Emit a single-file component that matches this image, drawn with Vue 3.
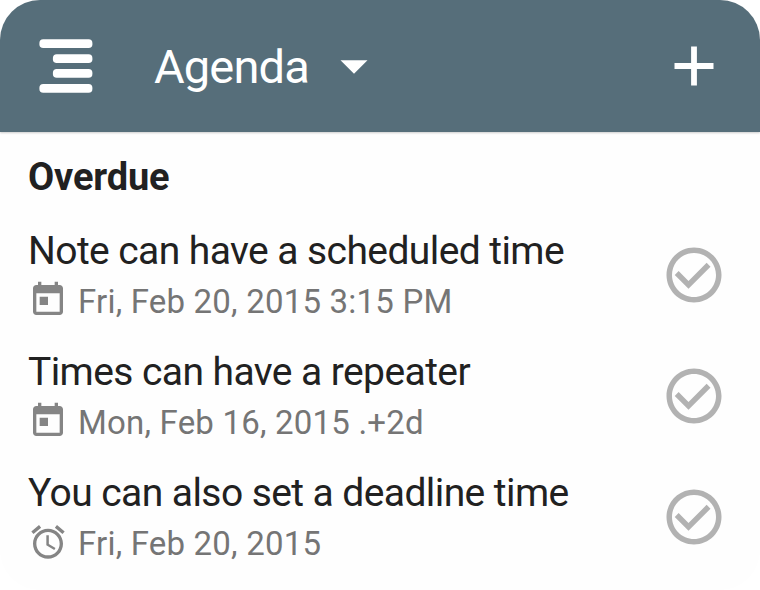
<script setup>
const notes = [
  { title: 'Note can have a scheduled time', when: 'Fri, Feb 20, 2015 3:15 PM', icon: 'today' },
  { title: 'Times can have a repeater', when: 'Mon, Feb 16, 2015 .+2d', icon: 'today' },
  { title: 'You can also set a deadline time', when: 'Fri, Feb 20, 2015', icon: 'alarm' },
]
const icons = {
  today: 'M19 3h-1V1h-2v2H8V1H6v2H5c-1.11 0-1.99.9-1.99 2L3 19c0 1.1.89 2 2 2h14c1.1 0 2-.9 2-2V5c0-1.1-.9-2-2-2zm0 16H5V8h14v11zM7 10h5v5H7z',
  alarm: 'M22 5.72l-4.6-3.86-1.29 1.53 4.6 3.86L22 5.72zM7.88 3.39L6.6 1.86 2 5.71l1.29 1.53 4.59-3.85zM12.5 8H11v6l4.75 2.85.75-1.23-4-2.37V8zM12 4c-4.97 0-9 4.03-9 9s4.02 9 9 9 9-4.03 9-9-4.03-9-9-9zm0 16c-3.87 0-7-3.13-7-7s3.13-7 7-7 7 3.13 7 7-3.13 7-7 7z',
}
</script>

<template>
  <main class="screen">
    <header class="bar">
      <svg class="menu" viewBox="0 0 54 54">
        <rect x="0.4" y="0.3" width="53" height="8.8" rx="3.8" />
        <rect x="13.9" y="15.2" width="39.5" height="8.8" rx="3.8" />
        <rect x="13.9" y="30" width="39.5" height="8.8" rx="3.8" />
        <rect x="0.4" y="44.9" width="53" height="8.8" rx="3.8" />
      </svg>
      <h1 class="heading">Agenda</h1>
      <svg class="caret" viewBox="0 0 28 14"><path d="M0.5 0.2h27L14 13.8z" /></svg>
      <svg class="plus" viewBox="0 0 40 40"><path d="M17.1 0.5h5.8V17.1h16.6v5.8H22.9v16.6h-5.8V22.9H0.5v-5.8h16.6z" /></svg>
    </header>
    <section class="list">
      <h2 class="group">Overdue</h2>
      <article v-for="n in notes" :key="n.title" class="note">
        <div class="body">
          <div class="title">{{ n.title }}</div>
          <div class="meta">
            <svg class="kind" viewBox="0 0 24 24"><path :d="icons[n.icon]" /></svg>
            <span>{{ n.when }}</span>
          </div>
        </div>
        <svg class="done" viewBox="0 0 24 24">
          <path d="M12 2C6.48 2 2 6.48 2 12s4.48 10 10 10 10-4.48 10-10S17.52 2 12 2zm0 18c-4.42 0-8-3.58-8-8s3.58-8 8-8 8 3.58 8 8-3.58 8-8 8zM16.59 7.58L10 14.17l-3.59-3.58L5 12l5 5 8-8z" />
        </svg>
      </article>
    </section>
  </main>
</template>

<style>
body { margin: 0; background: #fff; }
</style>

<style scoped>
.screen {
  width: 760px;
  height: 590px;
  overflow: hidden;
  border-radius: 40px;
  background: #fefefe;
  font-family: Roboto, sans-serif;
  color: #212121;
}
svg { display: block; flex: none; }
.bar {
  box-sizing: border-box;
  height: 132px;
  display: flex;
  align-items: center;
  padding: 0 46px 0 39px;
  background: #566e7a;
  fill: #fff;
  color: #fff;
  box-shadow: 0 1px 2px rgba(0, 0, 0, 0.2);
}
.menu { width: 54px; height: 54px; }
.heading {
  margin: 1px 0 0 61px;
  width: 186px;
  font-size: 47px;
  line-height: 56px;
  font-weight: 400;
  letter-spacing: -0.85px;
  white-space: nowrap;
}
.caret { width: 28px; height: 14px; margin-top: 2px; }
.plus { width: 40px; height: 40px; margin-left: auto; }
.list { padding: 20px 33px 0 28px; }
.group {
  margin: 0;
  height: 74px;
  font-size: 38px;
  line-height: 50px;
  font-weight: 700;
  letter-spacing: -0.15px;
}
.note {
  height: 121px;
  display: flex;
  justify-content: space-between;
}
.title {
  height: 54px;
  font-size: 39px;
  line-height: 50px;
  letter-spacing: -0.58px;
  white-space: nowrap;
}
.meta {
  display: flex;
  height: 40px;
  gap: 10px;
  font-size: 33px;
  line-height: 44px;
  letter-spacing: 0.2px;
  color: #757575;
  white-space: nowrap;
}
.kind { width: 40px; height: 40px; fill: #858585; }
.done { width: 66px; height: 66px; margin-top: 16px; fill: #b2b2b2; }
</style>
